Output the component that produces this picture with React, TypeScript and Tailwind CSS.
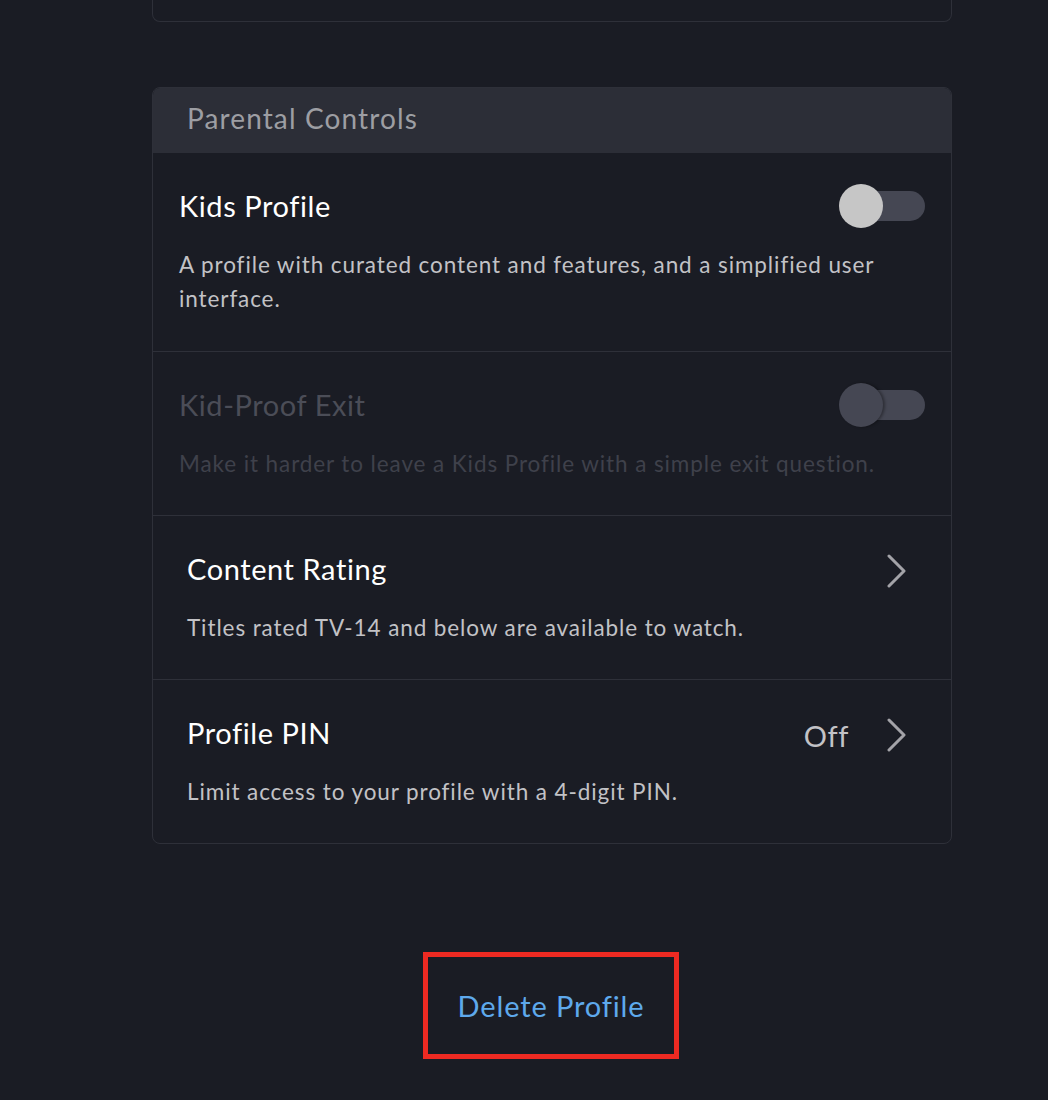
import React from 'react';

type ToggleProps = { disabled?: boolean };

function Toggle({ disabled }: ToggleProps) {
  return (
    <div className="relative h-[36px] w-[86px] shrink-0">
      <div className="absolute right-0 top-[3px] h-[30px] w-[80px] rounded-full bg-[#454753]" />
      <div
        className={`absolute left-0 top-[-4px] h-[44px] w-[44px] rounded-full ${
          disabled ? 'bg-[#454753] shadow-[2px_0_3px_rgba(0,0,0,0.35)]' : 'bg-[#c6c6c6]'
        }`}
      />
    </div>
  );
}

function Chevron() {
  return (
    <svg width="19" height="34" viewBox="0 0 19 34" fill="none" className="mt-[4px] shrink-0">
      <path d="M2 2 L17 17 L2 32" stroke="#a3a3a8" strokeWidth="3" strokeLinecap="round" strokeLinejoin="round" />
    </svg>
  );
}

const title = 'text-[29px] leading-[36px] tracking-[0.02em]';
const desc = 'mt-[24px] text-[22.5px] leading-[34px] tracking-[0.04em]';

export default function App() {
  return (
    <div
      className="min-h-[1100px] w-full bg-[#1a1c24] text-white"
      style={{ fontFamily: 'Lato, "Noto Sans", sans-serif' }}
    >
      <div className="ml-[152px] w-[800px]">
        {/* tail of the card above */}
        <div className="h-[22px] rounded-b-lg border border-t-0 border-[#2e3039]" />

        {/* Parental Controls */}
        <div className="mt-[65px] overflow-hidden rounded-lg border border-[#2e3039]">
          <div className="flex h-[65px] items-center bg-[#2c2e37] px-[34px] pb-[5px] text-[28px] tracking-[0.04em] text-[#9d9ea3]">
            Parental Controls
          </div>

          <div className="border-b border-[#2e3039] px-[26px] pb-[35px] pt-[35px]">
            <div className="flex h-[36px] items-center justify-between">
              <span className={`${title} text-white`}>Kids Profile</span>
              <Toggle />
            </div>
            <p className={`${desc} pr-[40px] text-[#c2c2c6]`}>
              A profile with curated content and features, and a simplified user interface.
            </p>
          </div>

          <div className="border-b border-[#2e3039] px-[26px] pb-[34px] pt-[35px]">
            <div className="flex h-[36px] items-center justify-between">
              <span className={`${title} text-[#4b4d57]`}>Kid-Proof Exit</span>
              <Toggle disabled />
            </div>
            <p className={`${desc} text-[#3f414b]`}>
              Make it harder to leave a Kids Profile with a simple exit question.
            </p>
          </div>

          <div className="border-b border-[#2e3039] pl-[34px] pr-[45px] pb-[34px] pt-[35px]">
            <div className="flex h-[36px] items-center justify-between">
              <span className={`${title} text-white`}>Content Rating</span>
              <Chevron />
            </div>
            <p className={`${desc} text-[#c2c2c6]`}>
              Titles rated TV-14 and below are available to watch.
            </p>
          </div>

          <div className="pl-[34px] pr-[45px] pb-[34px] pt-[35px]">
            <div className="flex h-[36px] items-center justify-between">
              <span className={`${title} text-white`}>Profile PIN</span>
              <div className="flex items-center gap-[38px]">
                <span className={`${title} mt-[6px] text-[#c2c2c6]`}>Off</span>
                <Chevron />
              </div>
            </div>
            <p className={`${desc} text-[#c2c2c6]`}>
              Limit access to your profile with a 4-digit PIN.
            </p>
          </div>
        </div>

        {/* Delete */}
        <div className="mt-[108px] flex justify-center pr-[2px]">
          <button
            type="button"
            className="flex h-[107px] w-[256px] items-center justify-center border-[5px] border-[#ee2a22] text-[29px] tracking-[0.03em] text-[#5ea9ec]"
          >
            Delete Profile
          </button>
        </div>
      </div>
    </div>
  );
}
